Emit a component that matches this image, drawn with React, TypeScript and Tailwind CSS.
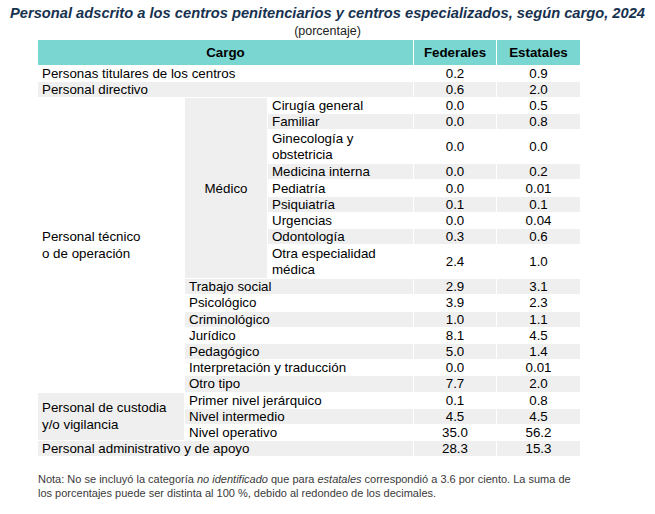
import React from "react";

const font = { fontFamily: '"Liberation Sans", Arial, sans-serif' };

type Row = {
  label: string;
  fed: string;
  est: string;
  gray?: boolean;
  tall?: boolean;
};

const cell = "px-[4px] py-0 align-middle";
const num = "text-center align-middle";

function bg(gray?: boolean) {
  return gray ? "bg-[#efefef]" : "bg-white";
}

function Nums({ r }: { r: Row }) {
  return (
    <>
      <td className={`${num} ${bg(r.gray)}`}>{r.fed}</td>
      <td className={`${num} ${bg(r.gray)}`}>{r.est}</td>
    </>
  );
}

const medico: Row[] = [
  { label: "Cirugía general", fed: "0.0", est: "0.5" },
  { label: "Familiar", fed: "0.0", est: "0.8", gray: true },
  { label: "Ginecología y obstetricia", fed: "0.0", est: "0.0", tall: true },
  { label: "Medicina interna", fed: "0.0", est: "0.2", gray: true },
  { label: "Pediatría", fed: "0.0", est: "0.01" },
  { label: "Psiquiatría", fed: "0.1", est: "0.1", gray: true },
  { label: "Urgencias", fed: "0.0", est: "0.04" },
  { label: "Odontología", fed: "0.3", est: "0.6", gray: true },
  { label: "Otra especialidad médica", fed: "2.4", est: "1.0", tall: true },
];

const tecnico: Row[] = [
  { label: "Trabajo social", fed: "2.9", est: "3.1", gray: true },
  { label: "Psicológico", fed: "3.9", est: "2.3" },
  { label: "Criminológico", fed: "1.0", est: "1.1", gray: true },
  { label: "Jurídico", fed: "8.1", est: "4.5" },
  { label: "Pedagógico", fed: "5.0", est: "1.4", gray: true },
  { label: "Interpretación y traducción", fed: "0.0", est: "0.01" },
  { label: "Otro tipo", fed: "7.7", est: "2.0", gray: true },
];

const custodia: Row[] = [
  { label: "Primer nivel jerárquico", fed: "0.1", est: "0.8" },
  { label: "Nivel intermedio", fed: "4.5", est: "4.5", gray: true },
  { label: "Nivel operativo", fed: "35.0", est: "56.2" },
];

export default function App() {
  return (
    <div className="w-[655px] h-[514px] bg-white text-black" style={font}>
      <h1 className="pt-[4px] text-center text-[14.7px] leading-[19px] font-bold italic text-[#17324f]">
        Personal adscrito a los centros penitenciarios y centros especializados, según cargo, 2024
      </h1>
      <p className="mt-[1px] text-center text-[12.5px] leading-[14px] text-[#222]">(porcentaje)</p>

      <table className="ml-[37px] mt-[1px] border-separate border-spacing-[1px] text-[13.33px] leading-[15px] table-fixed w-[544px]">
        <colgroup>
          <col className="w-[146px]" />
          <col className="w-[82px]" />
          <col className="w-[145px]" />
          <col className="w-[82px]" />
          <col className="w-[83px]" />
        </colgroup>
        <thead>
          <tr className="h-[24.5px] bg-[#79d6d0] font-bold">
            <th colSpan={3} className="text-center align-middle">Cargo</th>
            <th className="text-center align-middle">Federales</th>
            <th className="text-center align-middle">Estatales</th>
          </tr>
        </thead>
        <tbody>
          <tr className="h-[15.2px]">
            <td colSpan={3} className={`${cell} bg-white`}>Personas titulares de los centros</td>
            <Nums r={{ label: "", fed: "0.2", est: "0.9" }} />
          </tr>
          <tr className="h-[15.2px]">
            <td colSpan={3} className={`${cell} bg-[#efefef]`}>Personal directivo</td>
            <Nums r={{ label: "", fed: "0.6", est: "2.0", gray: true }} />
          </tr>

          {medico.map((r, i) => (
            <tr key={r.label} className={r.tall ? "h-[33px]" : "h-[15.2px]"}>
              {i === 0 && (
                <>
                  <td rowSpan={16} className={`${cell} bg-white leading-[17px]`}>
                    Personal técnico
                    <br />o de operación
                  </td>
                  <td rowSpan={9} className="bg-[#efefef] text-center align-middle">Médico</td>
                </>
              )}
              <td className={`${cell} ${bg(r.gray)} ${r.tall ? "leading-[16px]" : ""}`}>{r.label}</td>
              <Nums r={r} />
            </tr>
          ))}

          {tecnico.map((r) => (
            <tr key={r.label} className="h-[15.2px]">
              <td colSpan={2} className={`${cell} ${bg(r.gray)}`}>{r.label}</td>
              <Nums r={r} />
            </tr>
          ))}

          {custodia.map((r, i) => (
            <tr key={r.label} className="h-[15.2px]">
              {i === 0 && (
                <td rowSpan={3} className={`${cell} bg-[#efefef] leading-[17px]`}>
                  Personal de custodia
                  <br />y/o vigilancia
                </td>
              )}
              <td colSpan={2} className={`${cell} ${bg(r.gray)}`}>{r.label}</td>
              <Nums r={r} />
            </tr>
          ))}

          <tr className="h-[15.2px]">
            <td colSpan={3} className={`${cell} bg-[#efefef]`}>Personal administrativo y de apoyo</td>
            <Nums r={{ label: "", fed: "28.3", est: "15.3", gray: true }} />
          </tr>
        </tbody>
      </table>

      <p className="ml-[38px] mt-[15px] text-[11px] leading-[14px] text-[#3a3a3a]">
        Nota: No se incluyó la categoría <i>no identificado</i> que para <i>estatales</i> correspondió a 3.6 por ciento. La suma de
        <br />
        los porcentajes puede ser distinta al 100 %, debido al redondeo de los decimales.
      </p>
    </div>
  );
}
